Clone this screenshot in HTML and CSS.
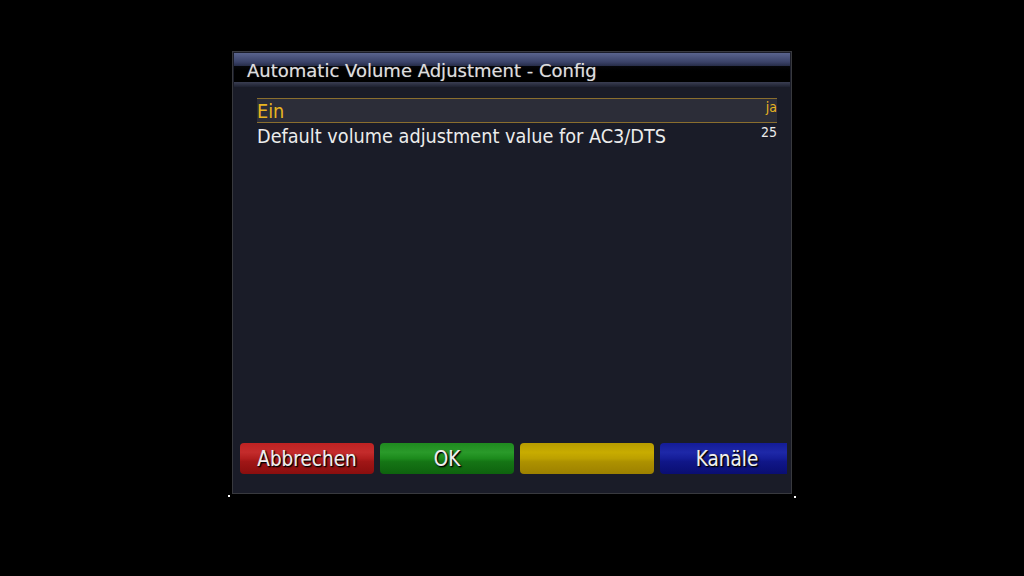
FILE: index.html
```html
<!DOCTYPE html>
<html>
<head>
<meta charset="utf-8">
<link rel="stylesheet" href="styles.css">
</head>
<body>
<div class="screen">
  <div class="window">
    <div class="titlebar">
      <div class="title-top"></div>
      <div class="title-text"><span>Automatic Volume Adjustment - Config</span></div>
      <div class="title-bottom"></div>
    </div>
    <div class="body">
      <div class="list">
        <div class="row selected"><span class="label">Ein</span><span class="value">ja</span></div>
        <div class="row"><span class="label">Default volume adjustment value for AC3/DTS</span><span class="value">25</span></div>
      </div>
      <div class="buttons">
        <div class="btn red">Abbrechen</div>
        <div class="btn green">OK</div>
        <div class="btn yellow"></div>
        <div class="btn blue">Kanäle</div>
      </div>
    </div>
    <span class="dot dot-left"></span>
    <span class="dot dot-right"></span>
  </div>
</div>
</body>
</html>
```
FILE: styles.css
```css
html, body { margin: 0; padding: 0; background: #000; }
.screen {
  width: 1024px; height: 576px; background: #000;
  display: flex; justify-content: center; align-items: flex-start;
  font-family: "DejaVu Sans Condensed", "DejaVu Sans", sans-serif;
}
.window {
  position: relative;
  margin-top: 51px;
  width: 556px; height: 439px;
  border: 1px solid #38393e;
  background: #1a1c28;
  display: flex; flex-direction: column;
  padding: 1px;
}
.titlebar { display: flex; flex-direction: column; }
.title-top {
  height: 13px;
  background: linear-gradient(#5a648e, #3a4268 70%, #262c48);
}
.title-text {
  height: 16px; background: linear-gradient(#05060a, #000 30%, #000);
  position: relative;
}
.title-text span {
  position: absolute; left: 13px; top: -5px;
  font-family: "DejaVu Sans", sans-serif;
  color: #dedede; font-size: 18px; line-height: 20px; white-space: nowrap;
  text-shadow: 0 0 1px rgba(220,220,220,0.5);
}
.title-bottom {
  height: 5px; background: linear-gradient(#3a3e52, #1e2130);
}
.body { flex: 1; display: flex; flex-direction: column; padding: 11px 0 0 0; }
.list { display: flex; flex-direction: column; padding: 0 13px 0 23px; }
.row {
  height: 23px; display: flex; justify-content: space-between; align-items: center;
  color: #ececec; font-size: 19.7px;
  border-top: 1px solid transparent; border-bottom: 1px solid transparent;
}
.label { padding-top: 2px; }
.row.selected { background: #2c2d38; border-color: #8a6e2e; color: #e8b520; }
.value { font-size: 14px; align-self: flex-start; padding-top: 0px; }
.buttons {
  margin-top: auto; margin-bottom: 18px;
  display: flex; gap: 6px; padding-left: 6px;
}
.btn {
  width: 134px; height: 31px; border-radius: 4px;
  color: #f0f0f0; font-size: 20.5px; text-align: center; line-height: 33px;
  text-shadow: 1px 1px 1px #000, 1px 1px 2px #000, 0 0 1px rgba(255,255,255,0.4);
}
.btn.red { background: linear-gradient(#bf2222 0%, #c42c2c 30%, #b21e1e 50%, #a01616 60%, #8a0e0e 100%); }
.btn.green { background: linear-gradient(#1f8a1f 0%, #2a9a2a 30%, #1c8a1c 50%, #157515 60%, #0e620e 100%); }
.btn.yellow { background: linear-gradient(#b89c00 0%, #c8ac00 30%, #bca000 50%, #ae9200 60%, #9c8000 100%); }
.btn.blue { width: 127px; padding-left: 7px; box-sizing: border-box; border-radius: 4px 0 0 4px; background: linear-gradient(#141c98 0%, #1e28a8 30%, #151d98 50%, #101688 60%, #0a0e72 100%); }
.dot { position: absolute; width: 2px; height: 2px; background: #fff; }
.dot-left { left: -5px; bottom: -4px; }
.dot-right { right: -5px; bottom: -5px; }
```
